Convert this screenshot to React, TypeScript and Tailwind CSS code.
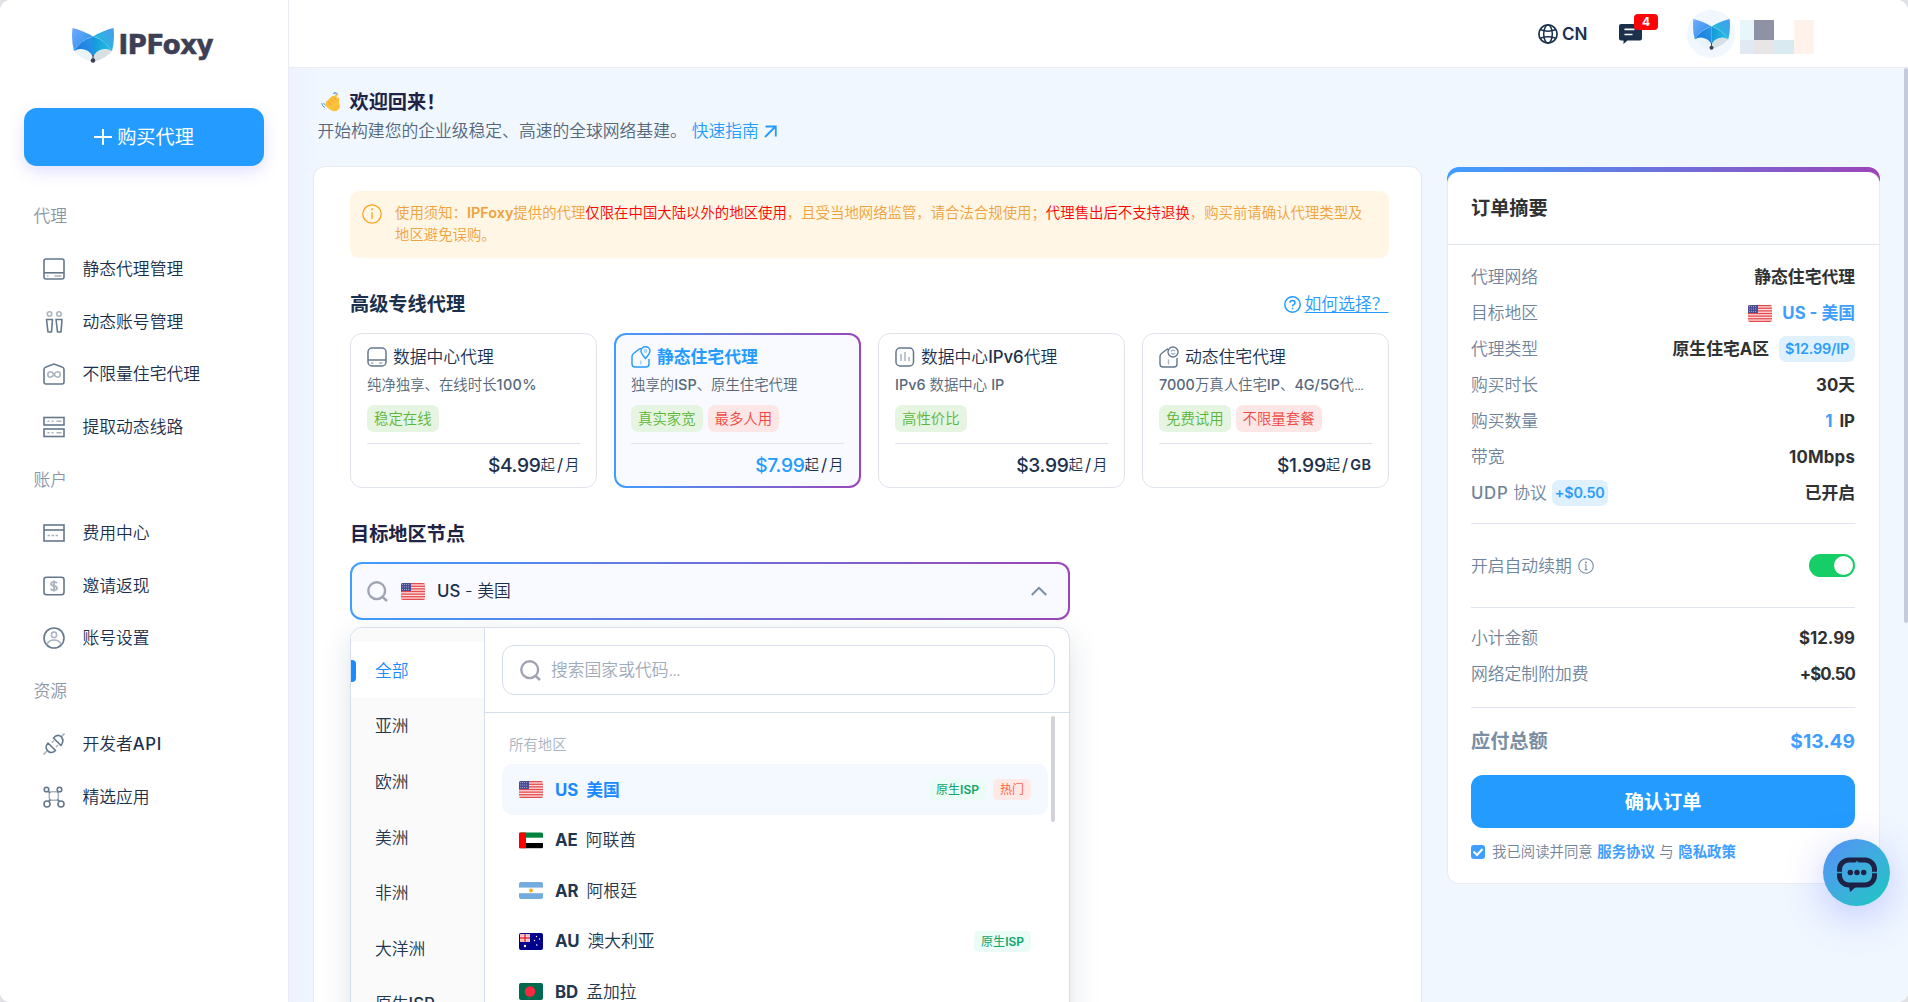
import React, { useState } from 'react';

type IconProps = { className?: string };

/* ---------- Logo ---------- */
const FoxMark: React.FC<IconProps> = ({ className }) => (
  <svg viewBox="0 0 42 36" className={className} fill="none">
    <defs>
      <linearGradient id="earL" x1="0" y1="0" x2="20" y2="16" gradientUnits="userSpaceOnUse">
        <stop stopColor="#74a9ff" />
        <stop offset="1" stopColor="#2f95ea" />
      </linearGradient>
      <linearGradient id="earR" x1="42" y1="0" x2="22" y2="16" gradientUnits="userSpaceOnUse">
        <stop stopColor="#4c98ea" />
        <stop offset="1" stopColor="#1cbfe0" />
      </linearGradient>
      <linearGradient id="wingL" x1="6" y1="20" x2="21" y2="14" gradientUnits="userSpaceOnUse">
        <stop stopColor="#1c7fe0" />
        <stop offset="1" stopColor="#2694e6" />
      </linearGradient>
      <linearGradient id="wingR" x1="21" y1="18" x2="40" y2="20" gradientUnits="userSpaceOnUse">
        <stop stopColor="#1499d8" />
        <stop offset="1" stopColor="#29bfe4" />
      </linearGradient>
    </defs>
    <path d="M1 22.500 Q6 31 21 35 L21 29 Q17 21 1 22.500Z" fill="#eaf3f5" />
    <path d="M41 22.500 Q36 31 21 35 L21 29 Q25 21 41 22.500Z" fill="#d6dfe1" />
    <path d="M.5 1 Q10 3 21 9.500 Q10 12 2 24 Q-1 13 .5 1Z" fill="url(#earL)" />
    <path d="M41.500 1 Q32 3 21 9.500 Q32 12 40 24 Q43 13 41.500 1Z" fill="url(#earR)" />
    <path d="M21 9.500 Q9 13 2 24 Q7 21 12 22.500 Q18.500 24 21 30Z" fill="url(#wingL)" />
    <path d="M21 9.500 Q33 13 40 24 Q35 21 30 22.500 Q23.500 24 21 30Z" fill="url(#wingR)" />
    <path d="M21 28v5" stroke="#3c3f52" strokeWidth="1" />
    <circle cx="21" cy="33.500" r="2.300" fill="#3c3f52" />
  </svg>
);

/* ---------- Sidebar icons (22x22) ---------- */
const Ico: React.FC<{ children: React.ReactNode }> = ({ children }) => (
  <svg viewBox="0 0 22 22" className="w-[22px] h-[22px] shrink-0" fill="none" stroke="#64788c" strokeWidth="1.6">
    {children}
  </svg>
);

const StaticIcon = () => (
  <Ico>
    <rect x="1" y="1" width="20" height="20" rx="2" />
    <path d="M1 14.8h20" />
    <path d="M4 18h1.5M11.500 18h7" stroke="#a9b4c0" />
  </Ico>
);
const PeopleIcon = () => (
  <Ico>
    <circle cx="6.500" cy="3" r="2.200" stroke="#a9b4c0" />
    <circle cx="16" cy="3" r="2.200" stroke="#a9b4c0" />
    <path d="M3.500 8.500h6l-1 12.500h-3.500zM13 8.500h6l-1 12.500h-3.500z" strokeLinejoin="round" />
  </Ico>
);
const InfinityIcon = () => (
  <Ico>
    <path d="M1 6.500Q1 4.500 3 4L11 1l8 3q2 .5 2 2.500V19q0 2-2 2H3q-2 0-2-2z" />
    <path d="M11 11.500C9.500 9 8.500 8.800 7.500 8.800a2.700 2.700 0 0 0 0 5.400c1 0 2-.2 3.500-2.700s2.500-2.700 3.500-2.700a2.700 2.700 0 0 1 0 5.400c-1 0-2-.2-3.500-2.700z" stroke="#a9b4c0" />
  </Ico>
);
const RouteIcon = () => (
  <Ico>
    <rect x="1" y="1.500" width="20" height="7.500" />
    <rect x="1" y="13" width="20" height="7.500" />
    <path d="M4.500 5.300h2M8.500 5.300h2M13.500 5.300h5M4.500 16.800h2M8.500 16.800h2M13.500 16.800h5" stroke="#a9b4c0" />
  </Ico>
);
const BillIcon = () => (
  <Ico>
    <rect x="1" y="3" width="20" height="16" />
    <path d="M1 8h20" />
    <path d="M4.500 13.500h2.500M8.500 13.500h2.500M12.500 13.500h2.500" stroke="#a9b4c0" />
  </Ico>
);
const InviteIcon = () => (
  <Ico>
    <rect x="1" y="2.300" width="20" height="17.400" rx="2.500" />
    <path d="M14 8.300Q13.500 6.800 11 6.800T8 8.800q0 1.800 3 2.200t3 2.200-3 2T8 13.500M11 5.500v11" stroke="#a9b4c0" strokeWidth="1.800" />
  </Ico>
);
const AccountIcon = () => (
  <Ico>
    <circle cx="11" cy="11" r="10" />
    <rect x="8.500" y="5" width="5" height="5.500" rx="2.300" stroke="#a9b4c0" />
    <path d="M4 17.500q1.500-4.500 7-4.500t7 4.500" stroke="#a9b4c0" />
  </Ico>
);
const ApiIcon = () => (
  <Ico>
    <path d="M.5 21.500l3.500-3.500M18 4l3.500-3.500M9 9.500l2-2M13 14l2-2" stroke="#a9b4c0" />
    <path d="M5 10l7.500 7.500Q9 21 5.500 18.500 1 15 5 10zM10.500 5l7.500 7.500Q21.500 8 18.500 4 14.500 .5 10.500 5z" strokeLinejoin="round" />
  </Ico>
);
const AppsIcon = () => (
  <Ico>
    <rect x="6.300" y="5.800" width="9" height="8.500" rx="2" stroke="#a9b4c0" />
    <path d="M5 5l2 2M14.500 6.500l1-1M7.500 13.500l-2 2M14.500 13.500l2 2" />
    <circle cx="3.500" cy="3.500" r="2.300" />
    <circle cx="16.500" cy="3.500" r="2.300" />
    <circle cx="4" cy="18" r="3" />
    <circle cx="18" cy="18" r="3" />
  </Ico>
);

/* ---------- Product card icons ---------- */
const DataCenterIcon = () => (
  <svg viewBox="0 0 20 20" className="w-5 h-5" fill="none" stroke="#64788c" strokeWidth="1.500">
    <rect x="1" y="1" width="18" height="18" rx="4" />
    <path d="M1 13h18" />
    <path d="M4 16h2.500M12 16h3.500" stroke="#a9b4c0" />
  </svg>
);
const StaticHomeIcon = () => (
  <svg viewBox="0 0 20 22" className="w-5 h-[22px]" fill="none" stroke="#239bff" strokeWidth="1.400">
    <path d="M10 2.500Q8.500 2.500 7 4L2.500 7.500Q1 8.500 1 10.500V18q0 3 3 3h11q3 0 3-3v-5" />
    <path d="M14.500 12.500Q10 7.500 10 5a4.500 4.300 0 0 1 9 0q0 2.500-4.500 7.500z" />
    <circle cx="14.500" cy="5" r="1.200" stroke="#9bd0ff" />
    <path d="M9.800 14.500v4" stroke="#9bd0ff" />
  </svg>
);
const Ipv6Icon = () => (
  <svg viewBox="0 0 20 20" className="w-5 h-5" fill="none" stroke="#64788c" strokeWidth="1.500">
    <rect x="1" y="1" width="17.500" height="18" rx="4" />
    <path d="M6 7v7M10 5v9M14 10v4" stroke="#a9b4c0" />
  </svg>
);
const DynamicHomeIcon = () => (
  <svg viewBox="0 0 20 22" className="w-5 h-[22px]" fill="none" stroke="#64788c" strokeWidth="1.400">
    <path d="M9 3Q8 3.200 7 4L2.500 7.500Q1 8.500 1 10.500V18q0 3 3 3h11q3 0 3-3v-6" />
    <circle cx="14" cy="6" r="5" />
    <path d="M11.800 5.500q2-2.500 4.400-.5M16.200 7q-2 2-4.400.3" stroke="#a9b4c0" />
    <path d="M9.500 13.500v5" stroke="#a9b4c0" />
  </svg>
);

const SearchIcon = () => (
  <svg viewBox="0 0 21 21" className="w-[21px] h-[21px] shrink-0" fill="none" stroke="#a0a4b2" strokeWidth="2.400">
    <circle cx="9.700" cy="9.700" r="8.400" />
    <path d="M15 15.500l5 4.500" />
  </svg>
);

/* ---------- Flags ---------- */
const Flag: React.FC<{ code: string }> = ({ code }) => (
  <svg viewBox="0 0 24 17" className="w-6 h-[17px] shrink-0 rounded-[2px]">
    {code === 'US' && (
      <>
        <rect width="24" height="17" fill="#fbdcdc" />
        {[0, 1, 2, 3, 4, 5, 6].map(i => (
          <rect key={i} y={i * 2.62} width="24" height="1.300" fill="#e64a4d" />
        ))}
        <rect width="10" height="8" fill="#4a4d94" />
        <path d="M1 1.500h8M1 4h8M1 6.500h8" stroke="#a4a6cf" strokeWidth=".9" strokeDasharray="1 1" />
      </>
    )}
    {code === 'AE' && (
      <>
        <rect width="24" height="17" fill="#fff" />
        <rect y=".5" width="24" height="5.200" fill="#00843d" />
        <rect y="11" width="24" height="5.200" fill="#000" />
        <rect y=".5" width="7" height="15.700" fill="#f00" />
      </>
    )}
    {code === 'AR' && (
      <>
        <rect width="24" height="17" fill="#74acdf" />
        <rect y="5.600" width="24" height="5.600" fill="#fff" />
        <circle cx="12" cy="8.500" r="1.900" fill="#f6b40e" />
      </>
    )}
    {code === 'AU' && (
      <>
        <rect width="24" height="17" fill="#00008b" />
        <rect x="1" y="1" width="10" height="8" fill="#f3b9bf" />
        <path d="M6 1v8M1 5h10" stroke="#fff" strokeWidth="2.600" />
        <path d="M6 1v8M1 5h10" stroke="#e8202e" strokeWidth="1.500" />
        <g fill="#fff">
          <circle cx="6" cy="13" r="1.200" />
          <circle cx="17.500" cy="3.500" r=".7" />
          <circle cx="20.500" cy="6" r=".7" />
          <circle cx="15.500" cy="7.500" r=".7" />
          <circle cx="17.800" cy="12" r=".8" />
        </g>
      </>
    )}
    {code === 'BD' && (
      <>
        <rect width="24" height="17" fill="#006a4e" />
        <circle cx="11" cy="8.500" r="5.300" fill="#f42a41" />
      </>
    )}
  </svg>
);

const MENU = [
  {
    group: '代理',
    items: [
      { icon: StaticIcon, label: '静态代理管理' },
      { icon: PeopleIcon, label: '动态账号管理' },
      { icon: InfinityIcon, label: '不限量住宅代理' },
      { icon: RouteIcon, label: '提取动态线路' }
    ]
  },
  {
    group: '账户',
    items: [
      { icon: BillIcon, label: '费用中心' },
      { icon: InviteIcon, label: '邀请返现' },
      { icon: AccountIcon, label: '账号设置' }
    ]
  },
  {
    group: '资源',
    items: [
      { icon: ApiIcon, label: '开发者', latin: 'API' },
      { icon: AppsIcon, label: '精选应用' }
    ]
  }
] as { group: string; items: { icon: React.FC; label: string; latin?: string }[] }[];

const PRODUCTS = [
  {
    icon: DataCenterIcon,
    title: '数据中心代理',
    desc: <>纯净独享、在线时长<span className="font-medium tracking-[0.400px]">100%</span></>,
    tags: ['稳定在线'],
    price: '$4.99',
    unit: '月'
  },
  {
    icon: StaticHomeIcon,
    title: '静态住宅代理',
    desc: <>独享的<L>ISP</L>、原生住宅代理</>,
    tags: ['真实家宽', '最多人用'],
    price: '$7.99',
    unit: '月'
  },
  {
    icon: Ipv6Icon,
    title: <>数据中心<L>IPv6</L>代理</>,
    desc: <><L>IPv6</L> 数据中心 <L>IP</L></>,
    tags: ['高性价比'],
    price: '$3.99',
    unit: '月'
  },
  {
    icon: DynamicHomeIcon,
    title: '动态住宅代理',
    desc: <><L>7000</L>万真人住宅<L>IP</L>、<L>4G/5G</L>代<span className="tracking-[-1px]">...</span></>,
    tags: ['免费试用', '不限量套餐'],
    price: '$1.99',
    unit: 'GB'
  }
];

const REGIONS = ['全部', '亚洲', '欧洲', '美洲', '非洲', '大洋洲'];

const COUNTRIES = [
  { code: 'US', name: '美国', isp: true, hot: true },
  { code: 'AE', name: '阿联酋' },
  { code: 'AR', name: '阿根廷' },
  { code: 'AU', name: '澳大利亚', isp: true },
  { code: 'BD', name: '孟加拉' }
];

// Latin runs are set heavier than the Chinese text around them
function L({ children }: { children: React.ReactNode }) {
  return <span className="font-medium">{children}</span>;
}

const Sidebar: React.FC = () => (
  <aside className="w-[289px] shrink-0 bg-white border-r border-[#e9edf2]">
    <div className="flex pl-[72px] pt-[27px] h-[108px] items-start">
      <FoxMark className="w-[42px] h-9" />
      <span className="ml-[4.500px] mt-[2px] font-['DejaVu_Sans'] font-bold text-[26px] leading-[32px] tracking-[-0.4px] text-[#3d4055] [-webkit-text-stroke:0.600px_#3d4055]">
        IPFoxy
      </span>
    </div>
    <button className="ml-6 w-60 h-[58px] rounded-[13px] bg-[#239bff] text-white text-[19.2px] flex items-center justify-center gap-[5px] shadow-[0_6px_16px_rgba(100,100,255,0.2)]">
      <svg viewBox="0 0 18 16" className="w-[18px] h-4" stroke="currentColor" strokeWidth="2" fill="none">
        <path d="M9 0v16M0 8h18" />
      </svg>
      <span className="font-normal">购买代理</span>
    </button>
    <nav className="pt-[23.6px]">
      {MENU.map(section => (
        <div key={section.group}>
          <div className="h-[52.8px] pl-[33.500px] flex items-center text-[#8a96a6]">{section.group}</div>
          {section.items.map(item => (
            <div key={item.label} className="h-[52.8px] pl-[43px] flex items-center gap-[17.500px]">
              <item.icon />
              <span>
                {item.label}
                {item.latin && <span className="font-medium tracking-[0.600px]">{item.latin}</span>}
              </span>
            </div>
          ))}
        </div>
      ))}
    </nav>
  </aside>
);

const Header: React.FC = () => (
  <header className="h-[68px] shrink-0 bg-white border-b border-[#e9edf2] flex items-center pl-[1249px]">
    <svg viewBox="0 0 20 20" className="w-5 h-5" fill="none" stroke="#1a304d" strokeWidth="1.500">
      <circle cx="10" cy="10" r="9.100" strokeWidth="1.700" />
      <ellipse cx="10" cy="10" rx="4.300" ry="9" />
      <path d="M2.500 5.800Q10 8.500 17.500 5.800M2.500 14.200Q10 11.500 17.500 14.200" />
    </svg>
    <span className="ml-1 w-[57px] text-[17px] font-semibold">CN</span>
    <div className="relative w-[23px] h-5">
      <svg viewBox="0 0 23 20" className="w-[23px] h-5">
        <path d="M2 0h19a2 2 0 0 1 2 2v12.500a2 2 0 0 1-2 2H8.500L4.500 20v-3.500H2a2 2 0 0 1-2-2V2a2 2 0 0 1 2-2z" fill="#1a304d" />
        <path d="M5.500 5.300h10M5.500 10.500h8" stroke="#fff" strokeWidth="1.700" />
      </svg>
      <span className="absolute -top-[10px] left-[15px] w-6 h-4 rounded bg-[#ff0404] text-white text-[12px] leading-4 font-bold text-center">4</span>
    </div>
    <div className="ml-[45px] w-12 h-12 rounded-full bg-[#f0f7ff] flex items-center justify-center">
      <FoxMark className="w-[37px] h-8" />
    </div>
    <div className="ml-[5px] mt-[6px] grid grid-cols-[14px_20px_20px_20px] grid-rows-[20px_14px]">
      <i className="bg-[#e8f5fb]" />
      <i className="bg-[#8f92a4]" />
      <i className="bg-white" />
      <i className="bg-[#fff2ea] row-span-2" />
      <i className="bg-[#e1e9f3]" />
      <i className="bg-[#e8e5e7]" />
      <i className="bg-[#d9ebf0]" />
    </div>
  </header>
);

const GRADIENT_BOX =
  'border-2 border-transparent [background:linear-gradient(#f8faff,#f8faff)_padding-box,linear-gradient(90deg,#409eff,#9c45b8)_border-box]';

const ProductCard: React.FC<{ product: (typeof PRODUCTS)[number]; active: boolean; onClick: () => void }> = ({
  product,
  active,
  onClick
}) => (
  <div
    onClick={onClick}
    className={`h-[155px] min-w-0 rounded-xl ${
      active ? `${GRADIENT_BOX} px-[15px] pt-[10px]` : 'border border-[#dfe4ec] px-4 pt-[11px]'
    }`}
  >
    <div className={`h-6 flex items-center gap-[6px] ${active ? 'text-[#239bff] font-bold' : ''}`}>
      <product.icon />
      <span>{product.title}</span>
    </div>
    <div className="mt-[5px] h-[22px] leading-[22px] text-[14.4px] text-[#55677b] whitespace-nowrap">{product.desc}</div>
    <div className="mt-[9px] flex gap-[5px] text-[14.4px]">
      {product.tags.map((tag, i) => (
        <span
          key={tag}
          className={`h-[27px] leading-[27px] px-[7px] rounded-[7px] ${
            i === 0 ? 'bg-[#e6f5e1] text-[#5cb53b]' : 'bg-[#fde7e6] text-[#f0483f]'
          }`}
        >
          {tag}
        </span>
      ))}
    </div>
    <div className="mt-[11px] border-t border-[#dfe4ec] h-[43px] flex items-center justify-end text-[14.4px]">
      <span className={`text-[19.2px] font-medium tracking-[-0.300px] ${active ? 'text-[#239bff]' : ''}`}>{product.price}</span>
      起<span className="text-[17px] mx-[2px] font-normal">/</span>
      {product.unit === 'GB' ? <span className="font-semibold tracking-[0.500px]">GB</span> : product.unit}
    </div>
  </div>
);

const RegionSelect: React.FC = () => {
  const [region, setRegion] = useState('全部');
  const [country, setCountry] = useState('US');

  return (
    <div className="w-[720px]">
      <div className={`h-[58px] rounded-xl flex items-center pl-[15px] pr-[21px] ${GRADIENT_BOX}`}>
        <SearchIcon />
        <span className="ml-[13px] flex items-center gap-3">
          <Flag code="US" />
          <span><L>US</L> - 美国</span>
        </span>
        <svg viewBox="0 0 16 10" className="ml-auto w-4 h-[10px]" fill="none" stroke="#7a8ea3" strokeWidth="2">
          <path d="M.8 9L8 1.800 15.200 9" />
        </svg>
      </div>

      {/* Dropdown */}
      <div className="mt-[7px] h-[480px] rounded-xl border border-[#d5deea] bg-white shadow-[0_10px_30px_rgba(30,60,90,0.15)] flex overflow-hidden">
        <div className="w-[134px] shrink-0 bg-[#fafafa] border-r border-[#d5deea] pt-[14px] text-[#22364e]">
          {REGIONS.map(r => (
            <div
              key={r}
              onClick={() => setRegion(r)}
              className={`h-[55.600px] flex items-center pt-[2px] ${region === r ? 'bg-white text-[#1a8bff]' : ''}`}
            >
              <span className={`w-[5px] h-[22px] rounded-r ${region === r ? 'bg-[#1a8bff]' : ''}`} />
              <span className="ml-[19px]">{r}</span>
            </div>
          ))}
          <div className="h-[55.600px] flex items-center pt-[2px] pl-6">
            原生<L>ISP</L>
          </div>
        </div>
        <div className="flex-1 min-w-0">
          <div className="h-[85px] border-b border-[#d5deea] pl-[17px] pr-[14px] pt-[17px]">
            <div className="h-[50px] border border-[#d5deea] rounded-xl flex items-center pl-[17px] gap-[10px] text-[#9eabbb]">
              <SearchIcon />
              <span>搜索国家或代码<span className="tracking-[-1px]">...</span></span>
            </div>
          </div>
          <div className="flex justify-between pl-[17px] pr-[14px]">
            <div className="w-[546px] text-[#22364e]">
              <div className="h-[51px] pl-[7px] pt-[13px] flex items-center text-[14.400px] text-[#a6b2c0]">所有地区</div>
              {COUNTRIES.map(c => {
                const active = c.code === country;
                return (
                  <div
                    key={c.code}
                    onClick={() => setCountry(c.code)}
                    className={`h-[50.500px] rounded-[10px] flex items-center pl-[17px] pr-[17px] pt-px ${
                      active ? 'bg-[#f4f8ff] text-[#1a8bff] font-bold' : ''
                    }`}
                  >
                    <Flag code={c.code} />
                    <span className="ml-3 font-bold">{c.code}</span>
                    <span className="ml-[8px]">{c.name}</span>
                    <span className="ml-auto flex gap-[7px] text-[12px] font-normal leading-[21px]">
                      {c.isp && (
                        <span className="h-[21px] px-[7px] rounded-[5px] bg-[#eafcf5] text-[#0ea56c]">
                          原生<span className="font-semibold">ISP</span>
                        </span>
                      )}
                      {c.hot && <span className="h-[21px] px-[7px] rounded-[5px] bg-[#ffe9e7] text-[#ff6550]">热门</span>}
                    </span>
                  </div>
                );
              })}
            </div>
            <div className="mt-[3px] w-1 h-[106px] rounded-full bg-[#d2d3d9]" />
          </div>
        </div>
      </div>
    </div>
  );
};

const SummaryRow: React.FC<{ label: React.ReactNode; children: React.ReactNode }> = ({ label, children }) => (
  <div className="h-9 flex items-center justify-between">
    <span className="flex items-center text-[#6f849a]">{label}</span>
    <span className="flex items-center font-bold text-[#303133]">{children}</span>
  </div>
);

const PriceBadge: React.FC<{ children: React.ReactNode; className?: string }> = ({ children, className }) => (
  <span className={`h-[26px] leading-[26px] rounded-[7px] bg-[#dff1ff] text-[#2b9dfb] text-[14.4px] font-semibold text-center tracking-[-0.200px] ${className}`}>
    {children}
  </span>
);

const OrderSummary: React.FC = () => {
  const [autoRenew, setAutoRenew] = useState(true);

  return (
    <div className="mt-[99px] w-[433px] h-[717px] shrink-0 rounded-xl overflow-hidden bg-[linear-gradient(#e9edf2,#e9edf2),linear-gradient(90deg,#409eff,#9c45b8)] bg-no-repeat [background-size:100%_690px,100%_100%] [background-position:0_27px,0_0] pt-[5px]">
      <div className="h-full bg-white rounded-xl border-x border-b border-[#e9edf2]">
        <div className="h-[73px] border-b border-[#dfe6ec] px-[23.500px] flex items-center text-[19.200px] font-bold text-[#303133]">订单摘要</div>
        <div className="px-[23.500px]">
          <div className="pt-[14px] pb-3 border-b border-[#dfe4ec]">
            <SummaryRow label="代理网络">静态住宅代理</SummaryRow>
            <SummaryRow label="目标地区">
              <Flag code="US" />
              <span className="ml-[10px] text-[#409eff]">US - 美国</span>
            </SummaryRow>
            <SummaryRow label="代理类型">
              原生住宅A区
              <PriceBadge className="ml-[10px] w-[76px]">$12.99/IP</PriceBadge>
            </SummaryRow>
            <SummaryRow label="购买时长">30天</SummaryRow>
            <SummaryRow label="购买数量">
              <span className="text-[#409eff] mr-[7px]">1</span>IP
            </SummaryRow>
            <SummaryRow label="带宽">
              <span className="tracking-[0.200px]">10Mbps</span>
            </SummaryRow>
            <SummaryRow
              label={
                <>
                  <span><span className="font-medium tracking-[0.700px]">UDP</span> 协议</span>
                  <PriceBadge className="ml-[5px] w-14">+$0.50</PriceBadge>
                </>
              }
            >
              已开启
            </SummaryRow>
          </div>
          <div className="h-[84px] border-b border-[#dfe4ec] flex items-center justify-between text-[#6f849a]">
            <span className="flex items-center gap-[6px]">
              开启自动续期
              <svg viewBox="0 0 16 16" className="w-4 h-4" fill="none" stroke="#7a8ea3" strokeWidth="1.100">
                <circle cx="8" cy="8" r="7.300" />
                <path d="M8 6.800v5M6.800 6.800H8M6.500 11.700h3" />
                <circle cx="8" cy="4.500" r=".4" fill="#7a8ea3" />
              </svg>
            </span>
            <button
              onClick={() => setAutoRenew(!autoRenew)}
              className={`w-[46px] h-[23px] rounded-full p-[2px] flex ${autoRenew ? 'bg-[#15ce66] justify-end' : 'bg-gray-300'}`}
            >
              <span className="w-[19px] h-[19px] rounded-full bg-white" />
            </button>
          </div>
          <div className="pt-3 h-[100px] border-b border-[#dfe4ec]">
            <SummaryRow label="小计金额">$12.99</SummaryRow>
            <SummaryRow label="网络定制附加费">
              <span className="tracking-[-0.900px]">+$0.50</span>
            </SummaryRow>
          </div>
          <div className="h-[65px] mb-[2px] flex items-center justify-between text-[19.200px] font-bold">
            <span className="text-[#7a8ea3]">应付总额</span>
            <span className="text-[#409eff]">$13.49</span>
          </div>
          <button className="w-full h-[53px] rounded-xl bg-[#239bff] text-white text-[19.200px] font-bold">确认订单</button>
          <div className="mt-3 flex items-center text-[14.400px] text-[#6f849a]">
            <span className="w-[14px] h-[14px] rounded-[3px] bg-[#409eff] mr-[7px] flex items-center justify-center">
              <svg viewBox="0 0 12 10" className="w-3 h-[10px]" fill="none" stroke="#fff" strokeWidth="2">
                <path d="M1.500 4.500L5 8l5.500-6" />
              </svg>
            </span>
            我已阅读并同意
            <a className="mx-[4.500px] font-bold text-[#409eff]">服务协议</a>
            与
            <a className="ml-[4.500px] font-bold text-[#409eff]">隐私政策</a>
          </div>
        </div>
      </div>
    </div>
  );
};

const App: React.FC = () => {
  const [selected, setSelected] = useState(1);

  return (
    <div className="relative w-[1908px] h-[1002px] overflow-hidden bg-[#dfe1e4]">
      <div className="h-full flex rounded-t-[11px] rounded-b-[10px] overflow-hidden bg-white font-['Inter','Noto_Sans_CJK_SC',sans-serif] font-[350] text-[16.8px] leading-6 text-[#1a304d]">
        <Sidebar />
        <div className="flex-1 min-w-0 flex flex-col">
          <Header />
          <div className="flex-1 min-h-0 flex bg-[#f0f7ff] bg-[linear-gradient(90deg,#edf2fe,#f0f7ff_30px)]">
            <main className="ml-6 w-[1109px] shrink-0 flex flex-col">
              <div className="pt-5 pl-[4.500px] h-[98px] shrink-0">
                <div className="h-7 flex items-center gap-[9px] pl-[3px] text-[19.200px] font-bold text-[#202346]">
                  <svg viewBox="0 0 20 20" className="w-5 h-5" fill="none">
                    <path d="M6 9L10.500 4.500q1.500-1.300 2.300 0L14.500 2.500q1.500-1 2 .5l-1 3 1.500-.5q1.500.2 1.300 1.800l-.3 3.700q1.800 3 0 6-3 3.500-7.500 1.500-4-2-6-5Q3.500 12 5 11.500q-.8-1.800 1-2.500z" fill="#fcc03a" />
                    <path d="M7 9.500l3.500 3.500M9.500 7l3.500 3.500M12.500 5l3 3.500" stroke="#e8962a" strokeWidth=".8" />
                    <path d="M.8 11q0 3.500 3.200 4.500M2.800 11q.2 1.500 1.500 2.300M12 1.500q3-1.500 4.500 1M13 .8q2.500-.5 3.500 1.200" stroke="#5a9fd8" strokeWidth="1" />
                  </svg>
                  欢迎回来！
                </div>
                <div className="mt-[2px] h-[26px] flex items-center text-[#55677b]">
                  开始构建您的企业级稳定、高速的全球网络基建。
                  <a className="ml-[5px] text-[#239bff] flex items-center gap-[5px]">
                    快速指南
                    <svg viewBox="0 0 13 13" className="w-[13px] h-[13px]" fill="none" stroke="currentColor" strokeWidth="1.800">
                      <path d="M1 12L11 2M1.500 1.500h10.300v10" />
                    </svg>
                  </a>
                </div>
              </div>

              <section className="h-[1000px] shrink-0 bg-white rounded-xl border border-[#e5eaf0] pl-[36px] pr-[32.500px] pt-6">
                <div className="h-[67px] rounded-[9px] bg-[#fff6e5] pl-3 pt-[11px] flex gap-[13px] text-[14.400px] leading-[21.600px] whitespace-nowrap text-[#f0a23a]">
                  <svg viewBox="0 0 20 20" className="w-5 h-5 mt-[2px] shrink-0" fill="none" stroke="#fba51a" strokeWidth="1.300">
                    <circle cx="10" cy="10" r="9.200" />
                    <path d="M10 8.200V15" />
                    <circle cx="10" cy="5.300" r=".4" />
                  </svg>
                  <p>
                    使用须知：<span className="font-semibold">IPFoxy</span>提供的代理
                    <span className="text-[#ff0000]">仅限在中国大陆以外的地区使用</span>
                    ，且受当地网络监管，请合法合规使用；
                    <span className="text-[#ff0000]">代理售出后不支持退换</span>
                    ，购买前请确认代理类型及
                    <br />
                    地区避免误购。
                  </p>
                </div>

                <div className="mt-8 h-7 flex items-center justify-between">
                  <h2 className="text-[19.200px] font-bold">高级专线代理</h2>
                  <a className="flex items-center gap-1 text-[#239bff]">
                    <svg viewBox="0 0 17 17" className="w-[17px] h-[17px]" fill="none" stroke="currentColor" strokeWidth="1.500">
                      <circle cx="8.500" cy="8.500" r="7.700" />
                      <path d="M6 6.800Q6 4.500 8.500 4.500T11 6.800q0 1.200-1.500 1.900-1 .5-1 1.800M8.500 11.800v1.500" />
                    </svg>
                    <span className="underline underline-offset-2">如何选择？</span>
                  </a>
                </div>

                <div className="mt-[15px] grid grid-cols-4 gap-[17.500px]">
                  {PRODUCTS.map((product, i) => (
                    <ProductCard key={i} product={product} active={i === selected} onClick={() => setSelected(i)} />
                  ))}
                </div>

                <h2 className="mt-8 mb-[14px] h-7 leading-7 text-[19.200px] font-bold text-[#202346]">目标地区节点</h2>
                <RegionSelect />
              </section>
            </main>

            <div className="ml-[24.500px] flex-1 flex justify-between">
              <OrderSummary />
              <div className="w-1 h-[555px] rounded bg-[#c6cbdb]" />
            </div>
          </div>
        </div>
      </div>

      {/* Support chat button */}
      <button className="absolute left-[1823px] top-[839px] w-[67px] h-[67px] rounded-full bg-gradient-to-br from-[#558df8] to-[#0bc8c0] shadow-[0_10px_40px_rgba(90,100,255,0.32)] flex items-center justify-center">
        <svg viewBox="0 0 40 36" className="w-10 h-9 mt-[5px]" fill="none">
          <path d="M12 3h16a9.500 9.500 0 0 1 9.500 9.500v6A9.500 9.500 0 0 1 28 28H12a9.500 9.500 0 0 1-9.500-9.500v-6A9.500 9.500 0 0 1 12 3z" stroke="#1d2246" strokeWidth="5" />
          <path d="M12 29h8l-7 6z" fill="#1d2246" />
          <path d="M18 5.700l2-2 2 2z" fill="#2baad8" />
          <path d="M0 15.500h5.500M34.500 15.500H40" stroke="#2baad8" strokeWidth="1.300" />
          <g fill="#1d2246">
            <circle cx="13.300" cy="15.500" r="2.700" />
            <circle cx="20" cy="15.500" r="2.700" />
            <circle cx="26.700" cy="15.500" r="2.700" />
          </g>
        </svg>
      </button>
    </div>
  );
};

export default App;
